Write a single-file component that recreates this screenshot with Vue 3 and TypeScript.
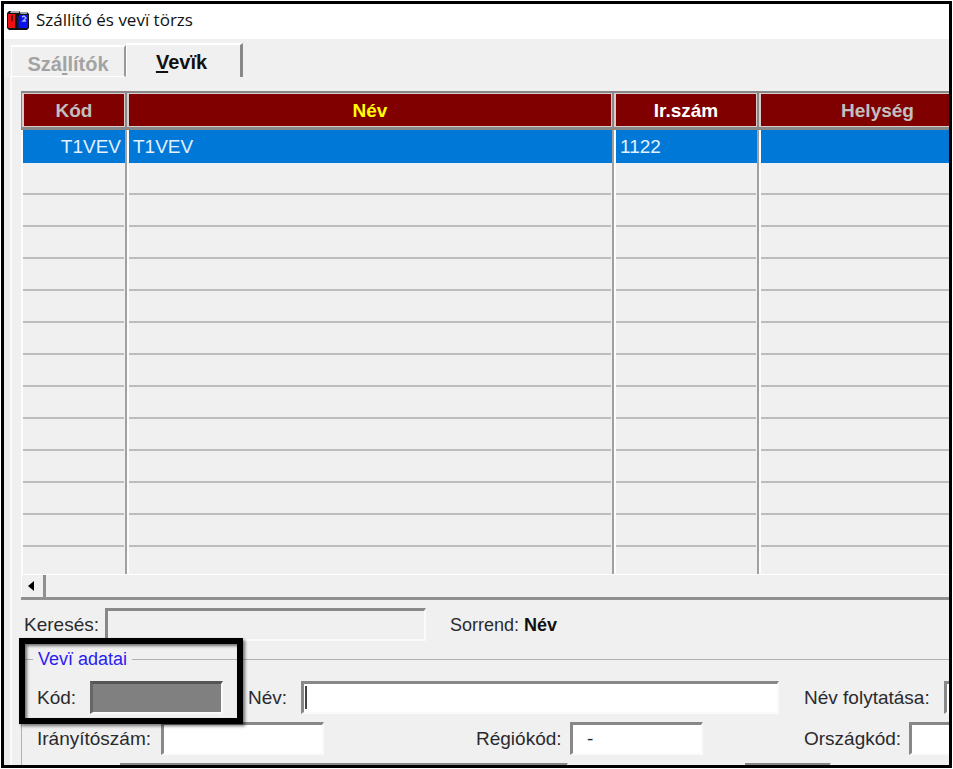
<script setup lang="ts">
import { ref } from 'vue'

interface Customer {
  code: string
  name: string
  zip: string
  city: string
}

const customers = ref<Customer[]>([{ code: 'T1VEV', name: 'T1VEV', zip: '1122', city: '' }])
const emptyRows = 13
const search = ref('')
const region = ref('-')
</script>

<template>
  <main class="window">
    <header class="titlebar">
      <svg class="app-icon" viewBox="0 0 22 20" aria-hidden="true">
        <path d="M0 3 L2 1 H12 L14 3 L15 2 H20 L22 4 V18 L20 20 H2 L0 18 Z" fill="#111" />
        <path d="M4 1 H12 V3 H3 Z" fill="#a9adb4" />
        <path d="M14 2 H20 V4 H13 Z" fill="#9a9faa" />
        <path d="M1 4 H8 V18 H2 L1 17 Z" fill="#ee1010" />
        <path d="M4 6 L6 5 V10 L5 12 L4 10 Z" fill="#5b1212" />
        <rect x="8" y="4" width="2" height="15" fill="#111" />
        <rect x="10" y="6" width="2" height="12" fill="#0b1670" />
        <path d="M12 5 H21 V17 L20 18 H12 Z" fill="#0a12ee" />
        <path d="M15 7 L17 6 L19 8 L16 11 H19" fill="none" stroke="#a8b4f8" stroke-width="1.4" />
      </svg>
      <h1>Szállító és vevï törzs</h1>
    </header>

    <nav class="tabs" role="tablist">
      <button class="tab" type="button" role="tab" aria-selected="false">Szá<u>l</u>lítók</button>
      <button class="tab active" type="button" role="tab" aria-selected="true"><u>V</u>evïk</button>
    </nav>

    <section class="panel">
      <div class="grid-wrap">
        <table class="grid">
          <colgroup>
            <col class="c-code" />
            <col class="c-name" />
            <col class="c-zip" />
            <col />
          </colgroup>
          <thead>
            <tr>
              <th><span class="muted">Kód</span></th>
              <th><span class="sorted">Név</span></th>
              <th><span>Ir.szám</span></th>
              <th><span class="muted">Helység</span></th>
            </tr>
          </thead>
          <tbody>
            <tr v-for="c in customers" :key="c.code" class="selected">
              <td class="right"><span>{{ c.code }}</span></td>
              <td><span>{{ c.name }}</span></td>
              <td><span>{{ c.zip }}</span></td>
              <td><span>{{ c.city }}</span></td>
            </tr>
            <tr v-for="n in emptyRows" :key="n">
              <td v-for="k in 4" :key="k"><span></span></td>
            </tr>
          </tbody>
        </table>
      </div>
      <div class="scrollbar">
        <button type="button" aria-label="Balra">
          <svg viewBox="0 0 6 10" aria-hidden="true"><path d="M6 0 V10 L0 5 Z" fill="#000" /></svg>
        </button>
      </div>

      <div class="search">
        <label for="search">Keresés:</label>
        <input id="search" v-model="search" class="field plain" type="text" />
        <p>Sorrend: <b>Név</b></p>
      </div>

      <fieldset class="details">
        <legend>Vevï adatai</legend>
        <div class="row first">
          <label class="short" for="code">Kód:</label>
          <input id="code" class="field code" type="text" disabled />
          <label class="short next" for="name">Név:</label>
          <div class="name-box">
            <input id="name" class="field" type="text" />
            <i class="caret"></i>
          </div>
          <label class="next long" for="name2">Név folytatása:</label>
          <input id="name2" class="field rest" type="text" />
        </div>
        <div class="row second">
          <div class="pair">
            <label class="zip-label" for="zip">Irányítószám:</label>
            <input id="zip" class="field zip" type="text" />
          </div>
          <div class="pair">
            <label class="region-label" for="region">Régiókód:</label>
            <input id="region" v-model="region" class="field code" type="text" />
          </div>
          <div class="pair">
            <label class="country-label" for="country">Országkód:</label>
            <input id="country" class="field rest" type="text" />
          </div>
        </div>
        <div class="row third">
          <input class="field street" type="text" aria-label="Cím" />
          <input class="field number" type="text" aria-label="Szám" />
        </div>
        <div class="highlight"></div>
      </fieldset>
    </section>
  </main>
</template>

<style>
body {
  background: #fff;
}
</style>

<style scoped>
* {
  box-sizing: border-box;
}

.window {
  margin: 1px;
  height: calc(100vh - 2px);
  border: 3px solid #000;
  overflow: hidden;
  background: #f0f0f0;
  color: #2a2a2e;
  font: 19px/22px 'Liberation Sans', Arial, sans-serif;
}

button,
input {
  font: inherit;
  color: inherit;
  border-radius: 0;
}

.titlebar {
  display: flex;
  align-items: center;
  gap: 7px;
  height: 35px;
  padding: 0 3px 3px;
  background: #fff;
}

.app-icon {
  width: 22px;
  height: 20px;
}

h1 {
  margin: 0;
  color: #111;
  font: 17px/22px 'Open Sans', 'Noto Sans', sans-serif;
}

.tabs {
  display: flex;
  align-items: flex-end;
  height: 38px;
  padding: 4px 0 0 7px;
}

.tab {
  width: 115px;
  height: 32px;
  padding: 4px 0 0;
  border: solid #fff;
  border-width: 2px 2px 1px 1px;
  border-right-color: #999;
  background: #f0f0f0;
  color: #a3a3a3;
  font-size: 20px;
  font-weight: bold;
}

.tab.active {
  width: 117px;
  height: 34px;
  padding: 2px 4px 0 0;
  border-width: 2px 3px 0 1px;
  border-right-color: #888;
  color: #111;
}

.tab u {
  text-underline-offset: 2px;
}

.panel {
  margin-left: 6px;
  padding: 14px 0 0 9px;
  border-left: 2px solid #fafafa;
  box-shadow: -6px 0 #ebebeb;
}

.grid-wrap {
  height: 483px;
  overflow: hidden;
}

.grid {
  width: calc(100% + 48px);
  table-layout: fixed;
  border-collapse: separate;
  border-spacing: 0;
}

.c-code {
  width: 106px;
}

.c-name {
  width: 487px;
}

.c-zip {
  width: 145px;
}

th {
  height: 39px;
  padding: 0;
  border: 2px solid #888;
  border-left-width: 0;
  border-bottom-width: 3px;
}

th:first-child {
  border-left-width: 1px;
}

th span {
  display: block;
  height: 34px;
  padding: 5px 0 3px;
  border: 1px solid #d8cccc;
  border-left-width: 2px;
  background: #800000;
  color: #fff;
  line-height: 24px;
}

th .muted {
  color: #c0c0c0;
}

th .sorted {
  color: #ff0;
}

td {
  height: 32px;
  padding: 0 1px 0 0;
  border-left: 2px solid #fcfcfc;
  border-right: 2px solid #a0a0a0;
}

td span {
  display: block;
  height: 32px;
  padding: 6px 4px 4px;
  border-bottom: 2px solid #bdbdbd;
}

.selected td {
  padding: 0;
}

.selected span {
  height: 33px;
  border-bottom: 0;
  background: #0078d7;
  color: #e4f1ff;
}

.right {
  text-align: right;
}

.scrollbar {
  height: 26px;
  border-top: 1px solid #fff;
  border-bottom: 3px solid #909090;
}

.scrollbar button {
  display: grid;
  place-items: center;
  width: 25px;
  height: 22px;
  padding: 0 4px 0 0;
  border: solid #fff;
  border-width: 0 3px 0 1px;
  border-right-color: #909090;
  background: #f0f0f0;
}

.scrollbar svg {
  width: 6px;
  height: 10px;
}

.field {
  flex: none;
  height: 33px;
  padding: 0 14px;
  border: solid #fafafa;
  border-width: 3px 2px 2px 3px;
  border-top-color: #888;
  border-left-color: #888;
  background: #fff;
  outline: 0;
}

.search {
  display: flex;
  align-items: center;
  margin-top: 8px;
  padding-left: 3px;
}

.search label {
  width: 81px;
}

.search .field {
  width: 321px;
}

.search p {
  margin: 0 0 0 24px;
  font-size: 18px;
}

.search b {
  color: #111;
}

.plain {
  background: #f0f0f0;
}

.details {
  position: relative;
  min-width: 0;
  margin: 7px -2px 0 0;
  padding: 0 0 0 15px;
  border: 1px solid #b0b0b0;
}

legend {
  margin-left: -4px;
  padding: 0 5px;
  color: #2a20f0;
  font-size: 18px;
}

.row {
  display: flex;
  align-items: center;
}

.row label {
  flex: none;
  white-space: nowrap;
}

.first {
  margin-top: 11px;
}

.short {
  width: 53px;
}

.next {
  margin-left: 25px;
}

.long {
  width: 140px;
}

.code {
  width: 133px;
}

.code:disabled {
  background: #808080;
  border-top-color: #555;
  border-left-color: #666;
}

.name-box {
  position: relative;
  display: flex;
}

.name-box .field {
  width: 478px;
}

.caret {
  position: absolute;
  top: 5px;
  left: 4px;
  width: 2px;
  height: 23px;
  background: #444;
}

.rest {
  width: 220px;
}

.second {
  display: grid;
  grid-template-columns: 439px 328px 326px;
  margin-top: 8px;
}

.pair {
  display: flex;
  align-items: center;
}

.zip-label {
  width: 124px;
}

.zip {
  width: 163px;
}

.region-label {
  width: 94px;
}

.country-label {
  width: 105px;
}

.third {
  gap: 177px;
  margin-top: 8px;
  padding-left: 83px;
}

.street {
  width: 448px;
}

.number {
  width: 86px;
}

.highlight {
  position: absolute;
  top: -32px;
  left: -3px;
  width: 224px;
  height: 86px;
  border: 6px solid #000;
  box-shadow: 2px 2px 3px #0008, inset 2px 2px 3px #0008;
  pointer-events: none;
}
</style>
